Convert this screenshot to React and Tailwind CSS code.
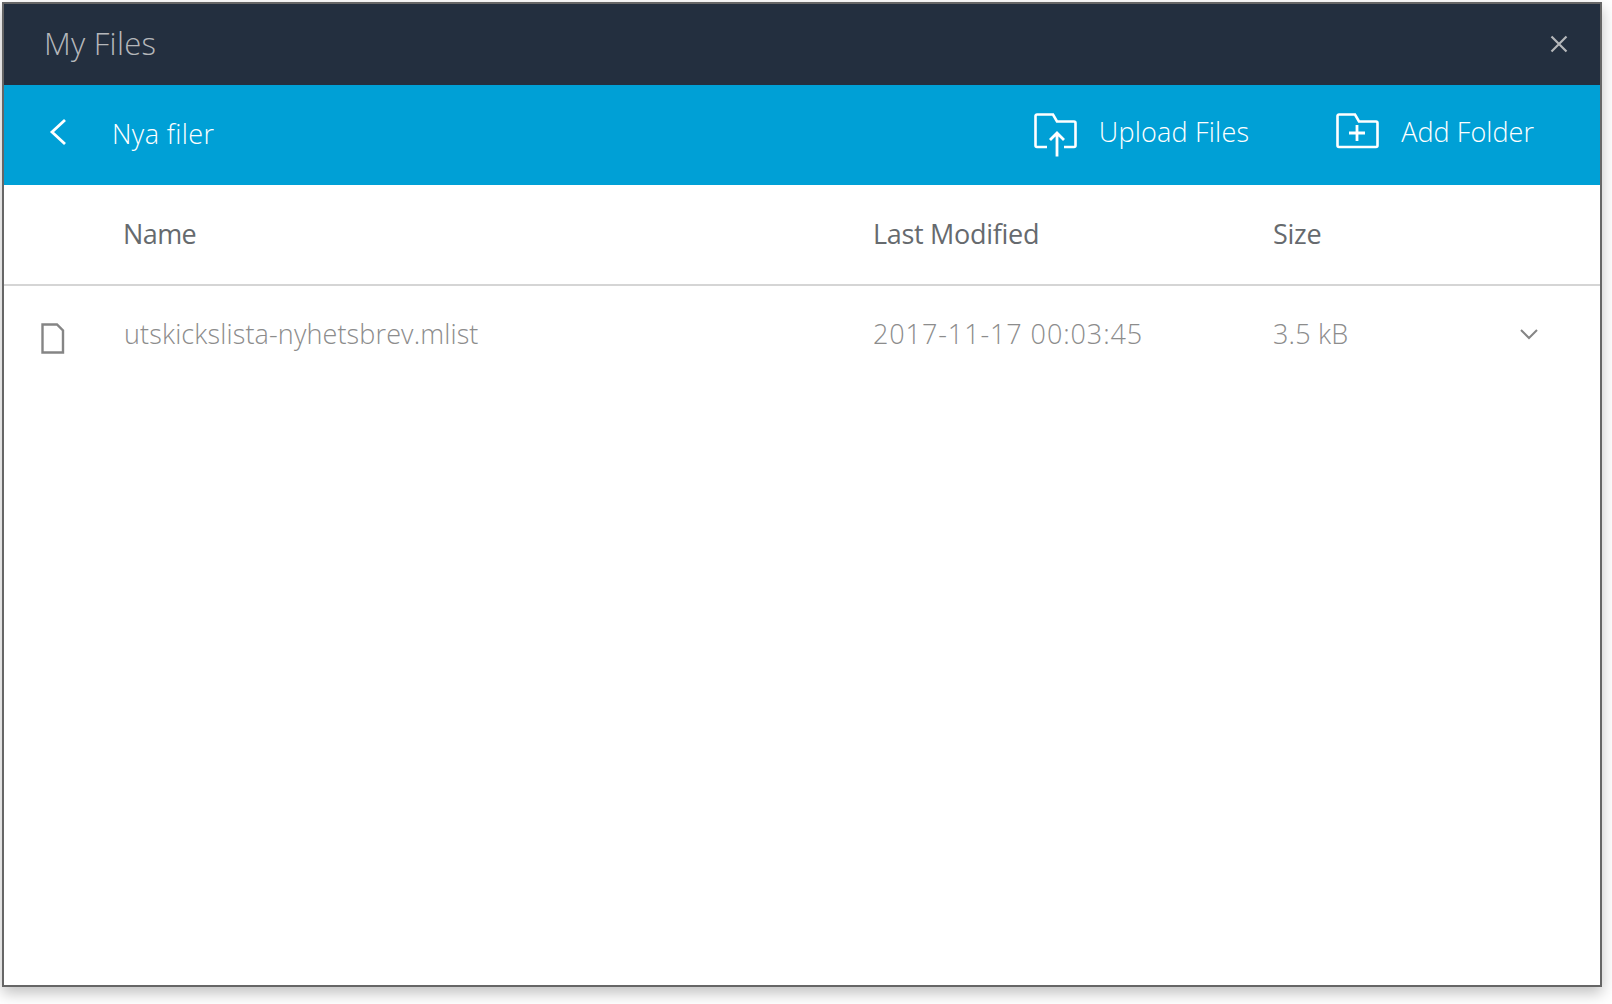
export default function App() {
  return (
    <div className="w-[1612px] h-[1004px] bg-white p-[2px] font-['Open_Sans','Noto_Sans',sans-serif]">
      <div className="w-[1600px] h-[985px] border-2 border-[#666666] bg-white flex flex-col shadow-[0_6px_14px_rgba(0,0,0,0.25)]">
        <div className="h-[81px] bg-[#232f3f] flex items-center justify-between pl-[40px] pr-[32px] shrink-0">
          <span className="text-[31px] font-light text-[#b5b7ba] tracking-[0.25px] leading-none mb-[2px]">My Files</span>
          <svg className="mb-[2px]" width="18" height="18" viewBox="0 0 18 18" fill="none" stroke="#b5b7ba" strokeWidth="2.2"><path d="M1.500 1.500 L16.500 16.500 M16.500 1.500 L1.500 16.500" /></svg>
        </div>
        <div className="h-[100px] bg-[#00a0d6] flex items-center shrink-0 text-white">
          <svg className="ml-[45px] mb-[6px]" width="18" height="28" viewBox="0 0 18 28" fill="none" stroke="#fff" strokeWidth="2.800"><path d="M16 2 L3 14 L16 26" /></svg>
          <span className="ml-[45px] mb-[3px] text-[27px] font-light leading-none tracking-[0.4px]">Nya filer</span>
          <div className="ml-auto flex items-center mr-[66px]">
            <svg width="44" height="44" viewBox="0 0 44 44" fill="none" stroke="#fff" strokeWidth="2.600">
              <path d="M13 34 H3 a1.500 1.500 0 0 1 -1.500 -1.500 V3 a1.500 1.500 0 0 1 1.500 -1.500 H19 L23 8.500 H40 a1.500 1.500 0 0 1 1.500 1.500 V32.500 a1.500 1.500 0 0 1 -1.500 1.500 H30" />
              <path d="M23 43.500 V21 M16 27 L23 20 L30 27" strokeWidth="2.800" />
            </svg>
            <span className="ml-[21px] mb-[7px] text-[27px] font-light leading-none tracking-[0.2px]">Upload Files</span>
            <svg className="ml-[87px] mb-[8px]" width="44" height="36" viewBox="0 0 44 36" fill="none" stroke="#fff" strokeWidth="2.600">
              <path d="M3 34 a1.500 1.500 0 0 1 -1.500 -1.500 V3 a1.500 1.500 0 0 1 1.500 -1.500 H19 L23 8.500 H40 a1.500 1.500 0 0 1 1.500 1.500 V32.500 a1.500 1.500 0 0 1 -1.500 1.500 Z" />
              <path d="M21 12 V28 M13 20 H29" strokeWidth="2.800" />
            </svg>
            <span className="ml-[21px] mb-[7px] text-[27px] font-light leading-none tracking-[0.05px]">Add Folder</span>
          </div>
        </div>
        <div className="h-[101px] shrink-0 border-b-2 border-[#d5d5d5] grid grid-cols-[120px_749px_400px_1fr] items-center text-[#666a6e] text-[27px] tracking-[-0.3px] leading-none">
          <div />
          <div className="font-normal mb-[2px] -ml-px tracking-[-0.6px]">Name</div>
          <div className="font-normal mb-[2px]">Last Modified</div>
          <div className="font-normal mb-[2px]">Size</div>
        </div>
        <div className="h-[98px] grid grid-cols-[120px_749px_400px_1fr] items-center text-[#8c8c8c] text-[27px] font-light leading-none">
          <div className="pl-[37px]">
            <svg className="mt-[6px]" width="24" height="31" viewBox="0 0 24 31" fill="none" stroke="#858585" strokeWidth="2.400"><path d="M1.500 1.500 H16 L22 7.500 V29.500 H1.500 Z" /></svg>
          </div>
          <div className="tracking-[0.13px] mb-[3px]">utskickslista-nyhetsbrev.mlist</div>
          <div className="tracking-[0.9px] mb-[3px]">2017-11-17 00:03:45</div>
          <div className="flex items-center justify-between pr-[62px] mb-[3px]">
            <span className="tracking-[0.2px]">3.5 kB</span>
            <svg width="18" height="12" viewBox="0 0 18 12" fill="none" stroke="#858585" strokeWidth="2"><path d="M1 2 L9 10 L17 2" /></svg>
          </div>
        </div>
      </div>
    </div>
  );
}
